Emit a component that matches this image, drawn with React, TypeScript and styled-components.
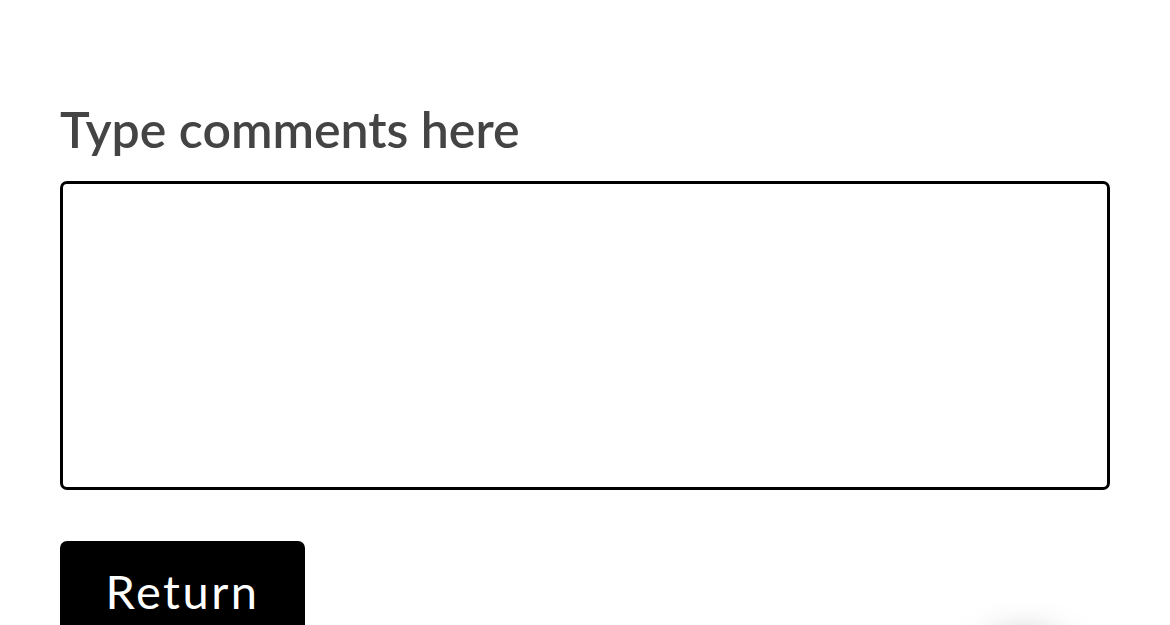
import * as React from 'react';
import styled, { createGlobalStyle } from 'styled-components';

const GlobalStyle = createGlobalStyle`
  html, body {
    margin: 0;
    padding: 0;
    background: #ffffff;
    font-family: Lato, "Liberation Sans", sans-serif;
    overflow: hidden;
  }
`

const Page = styled.div`
  display: flex;
  flex-direction: column;
  align-items: flex-start;
  padding: 100px 60px 0 60px;
  height: 625px;
  box-sizing: border-box;

  & > * {
    flex-shrink: 0;
  }
`

const Label = styled.label`
  font-size: 50px;
  line-height: 58px;
  font-weight: 600;
  color: #444444;
  margin: 0 0 23px 0;
`

const Comments = styled.textarea`
  width: 1050px;
  height: 309px;
  box-sizing: border-box;
  border: 3px solid #000000;
  border-radius: 7px;
  resize: none;
  outline: none;
  padding: 12px;
  font-family: Lato, "Liberation Sans", sans-serif;
  font-size: 24px;
  margin: 0;
`

const ReturnButton = styled.button`
  margin-top: 51px;
  width: 245px;
  height: 100px;
  border: none;
  border-radius: 7px;
  background: #000000;
  color: #ffffff;
  font-family: Lato, "Liberation Sans", sans-serif;
  font-size: 47px;
  letter-spacing: 2.5px;
  line-height: 100px;
  padding: 0 0 14px 0;
  cursor: pointer;
`

const FloatingButton = styled.div`
  position: fixed;
  left: 970px;
  top: 638px;
  width: 110px;
  height: 110px;
  border-radius: 50%;
  background: #ffffff;
  box-shadow: 0 0 36px rgba(0, 0, 0, 0.35);
`

export default function App() {
  return (
    <>
      <GlobalStyle />
      <Page>
        <Label htmlFor="comments">Type comments here</Label>
        <Comments id="comments" />
        <ReturnButton>Return</ReturnButton>
      </Page>
      <FloatingButton />
    </>
  );
}
